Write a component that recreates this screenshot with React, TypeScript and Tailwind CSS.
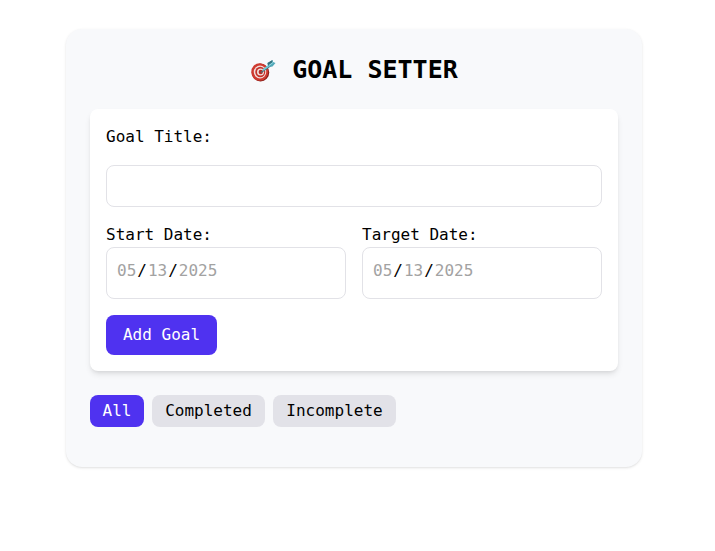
import { useState } from "react";

const filters = [
  { name: "All", width: "min-w-[54px]" },
  { name: "Completed", width: "min-w-[113px]" },
  { name: "Incomplete", width: "min-w-[123px]" },
];

function TargetIcon() {
  return (
    <svg viewBox="0 0 52 52" className="size-[26px]" aria-hidden="true">
      <ellipse cx="21" cy="31" rx="17.5" ry="18" fill="#84201b" />
      <ellipse cx="19.5" cy="30" rx="17" ry="17.5" fill="#cf3a30" />
      <ellipse cx="20" cy="30" rx="12.5" ry="13" fill="#f1dfdc" />
      <ellipse cx="20.5" cy="30" rx="10" ry="10.5" fill="#c5332b" />
      <ellipse cx="21" cy="30" rx="7" ry="7.2" fill="#f1dfdc" />
      <ellipse cx="21.5" cy="30" rx="4.2" ry="4.4" fill="#b92b24" />
      <path d="M22 31 42 17" stroke="#4b6f78" strokeWidth="3" />
      <path d="M26 26 41 15" stroke="#6fcbd9" strokeWidth="4" />
      <path d="M36 17 35 12 45 6 46 10 51 12 45 19 38 20Z" fill="#52a9b9" />
      <path d="M35 12 45 6 44 11 36 17Z" fill="#37737f" />
      <path d="M38 17 46 11" stroke="#93d9e2" strokeWidth="2" />
    </svg>
  );
}

function DateField({ id, label }: { id: string; label: string }) {
  return (
    <div className="flex min-w-0 flex-1 flex-col">
      <label htmlFor={id}>{label}</label>
      <input
        id={id}
        type="date"
        lang="en-US"
        defaultValue="2025-05-13"
        className="h-[52px] w-full rounded-lg border border-[#e2e2e7] bg-white px-[9px] pt-2 pb-3 [&::-webkit-calendar-picker-indicator]:hidden [&::-webkit-datetime-edit-day-field]:text-[#a2a2a2] [&::-webkit-datetime-edit-month-field]:text-[#a2a2a2] [&::-webkit-datetime-edit-year-field]:text-[#a2a2a2]"
      />
    </div>
  );
}

export default function App() {
  const [active, setActive] = useState("All");

  return (
    <div className="min-h-screen bg-white pt-[29px] pr-[7px] font-['DejaVu_Sans_Mono','Liberation_Mono',monospace] text-base text-black">
      <main className="mx-auto max-w-xl rounded-2xl bg-[#f8f9fb] p-6 shadow-sm">
        <h1 className="mb-[22px] flex items-center justify-center gap-4 text-[25px] leading-[34px] font-bold">
          <TargetIcon />
          GOAL SETTER
        </h1>
        <form
          className="mb-6 flex flex-col gap-4 rounded-lg bg-white p-4 shadow-md"
          onSubmit={(e) => e.preventDefault()}
        >
          <label htmlFor="title">Goal Title:</label>
          <input
            id="title"
            type="text"
            className="w-full rounded-lg border border-[#e2e2e7] bg-white p-2"
          />
          <div className="flex gap-4">
            <DateField id="start" label="Start Date:" />
            <DateField id="target" label="Target Date:" />
          </div>
          <button
            type="submit"
            className="min-w-[111px] self-start rounded-lg bg-[#4f32f0] px-4 py-2 text-white"
          >
            Add Goal
          </button>
        </form>
        <div className="mb-4 flex gap-2">
          {filters.map(({ name, width }) => (
            <button
              key={name}
              type="button"
              onClick={() => setActive(name)}
              className={`${width} rounded-lg px-3 py-1 ${
                active === name ? "bg-[#4f32f0] text-white" : "bg-[#e2e2e8]"
              }`}
            >
              {name}
            </button>
          ))}
        </div>
      </main>
    </div>
  );
}
